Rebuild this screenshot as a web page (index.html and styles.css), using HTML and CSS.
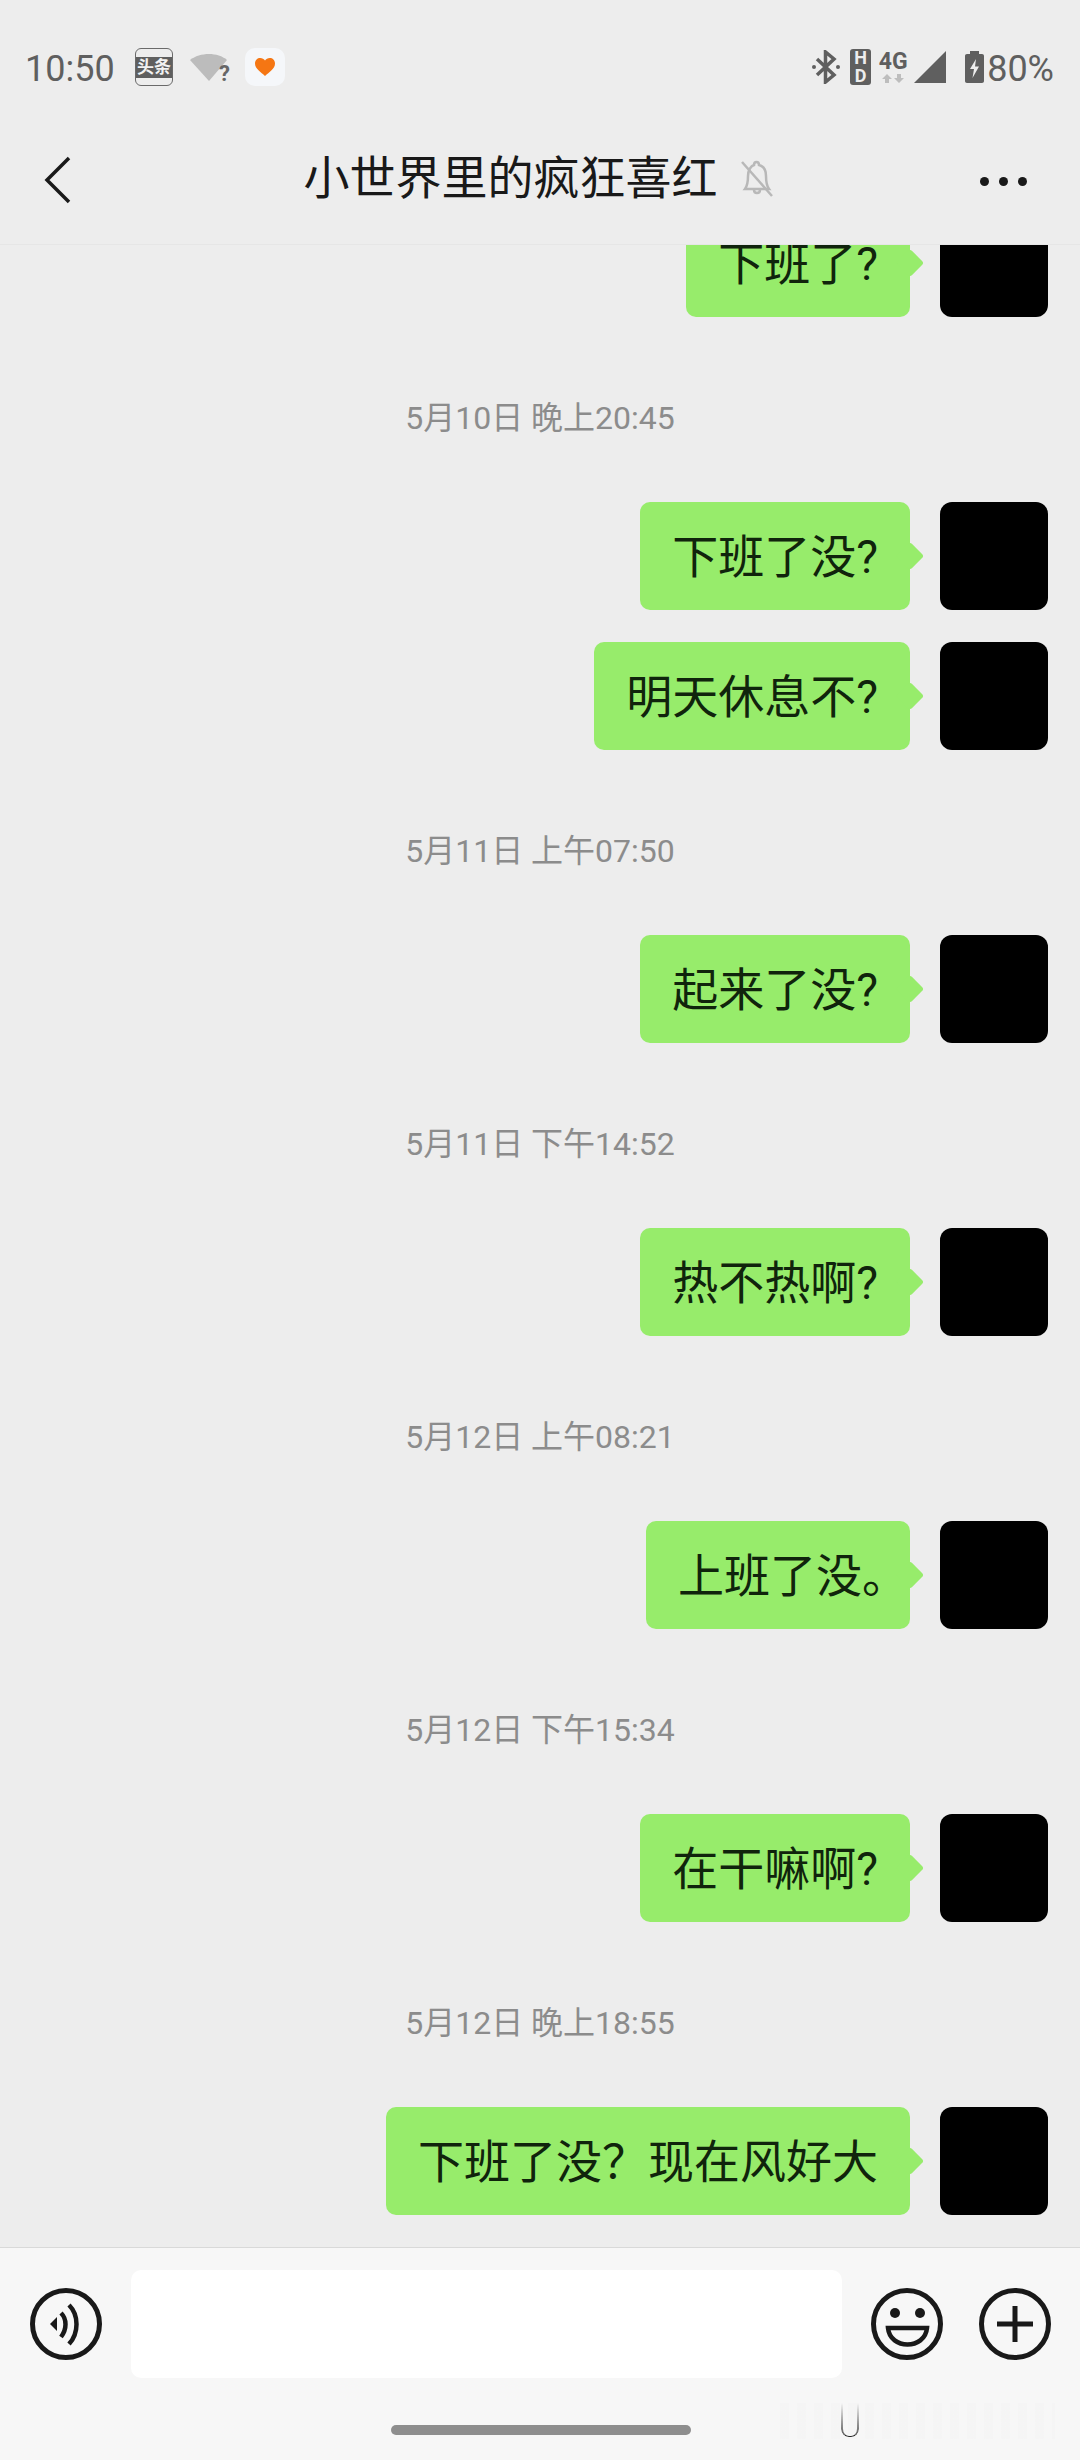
FILE: index.html
```html
<!DOCTYPE html>
<html lang="zh-CN">
<head>
    <meta charset="UTF-8">
    <meta name="viewport" content="width=device-width, initial-scale=1.0">
    <title>小世界里的疯狂喜红</title>
    <link rel="stylesheet" href="styles.css">
</head>
<body>
    <div class="container">
        <div class="status-bar">
            <div class="status-left">
                <span class="status-time">10:50</span>
                <div class="toutiao-icon"><span>头条</span></div>
                <div class="wifi-icon">
                    <svg width="38" height="32" viewBox="0 0 38 32"><path d="M0 9C10 1 28 1 37 9L19 30Z" fill="#bcbcbc"/></svg>
                    <span class="wifi-mark">?</span>
                </div>
                <div class="heart-icon">
                    <svg width="20" height="18" viewBox="0 0 20 18"><path d="M10 18C6 14 0 11 0 5.500C0 2 2.500 0 5.200 0C7.300 0 9 1 10 2.500C11 1 12.700 0 14.800 0C17.500 0 20 2 20 5.500C20 11 14 14 10 18Z" fill="#f57613"/></svg>
                </div>
            </div>
            <div class="status-right">
                <svg class="bt-icon" width="28" height="34" viewBox="0 0 28 34">
                    <path d="M5 9L22 25L13.500 32V2L22 9L5 25" fill="none" stroke="#5f5f5f" stroke-width="3.500"/>
                    <circle cx="2" cy="17" r="2" fill="#5f5f5f"/>
                    <circle cx="26" cy="17" r="2" fill="#5f5f5f"/>
                </svg>
                <div class="hd-icon"><span>H</span><span>D</span></div>
                <div class="net-icon">
                    <span class="net-label">4G</span>
                    <svg width="22" height="10" viewBox="0 0 22 10"><path d="M5 0L10 5H7V9H3V5H0ZM17 9L12 4H15V0H19V4H22Z" fill="#bdbdbd"/></svg>
                </div>
                <svg class="signal-icon" width="32" height="32" viewBox="0 0 32 32"><path d="M32 0V32H0Z" fill="#5f5f5f"/></svg>
                <svg class="battery-icon" width="19" height="32" viewBox="0 0 19 32">
                    <path d="M5 0H14V3H17C18.200 3 19 3.800 19 5V30C19 31.200 18.200 32 17 32H2C.800 32 0 31.200 0 30V5C0 3.800 .800 3 2 3H5Z" fill="#5f5f5f"/>
                    <path d="M11 8L5 18H9L7.500 27L14 15.500H10Z" fill="#ededed"/>
                </svg>
                <span class="status-battery">80%</span>
            </div>
        </div>

        <div class="nav-bar">
            <svg class="back-btn" width="30" height="48" viewBox="0 0 30 48"><path d="M26 2L4 24L26 46" fill="none" stroke="#191919" stroke-width="3.500"/></svg>
            <div class="nav-title">
                <span class="title-text">小世界里的疯狂喜红</span>
                <svg width="34" height="38" viewBox="0 0 34 38">
                    <path d="M5 30C8 26 8 22 8 17C8 11 11 7 14 6C14 2 19 2 19 6C23 7 26 11 26 17C26 22 26 26 29 30Z M14 31C14 35 20 35 20 31" fill="none" stroke="#b8b8b8" stroke-width="2.500"/>
                    <path d="M2 3L32 37" stroke="#b8b8b8" stroke-width="2.500"/>
                </svg>
            </div>
            <div class="more-btn"><i></i><i></i><i></i></div>
        </div>

        <div class="chat-list">
            <div class="msg-row first-row">
                <div class="bubble">下班了?</div>
                <div class="avatar"></div>
            </div>

            <div class="msg-time">5月10日 晚上20:45</div>
            <div class="msg-row">
                <div class="bubble">下班了没?</div>
                <div class="avatar"></div>
            </div>
            <div class="msg-row next-row">
                <div class="bubble">明天休息不?</div>
                <div class="avatar"></div>
            </div>

            <div class="msg-time">5月11日 上午07:50</div>
            <div class="msg-row">
                <div class="bubble">起来了没?</div>
                <div class="avatar"></div>
            </div>

            <div class="msg-time">5月11日 下午14:52</div>
            <div class="msg-row">
                <div class="bubble">热不热啊?</div>
                <div class="avatar"></div>
            </div>

            <div class="msg-time">5月12日 上午08:21</div>
            <div class="msg-row">
                <div class="bubble">上班了没<span class="half-punct">。</span></div>
                <div class="avatar"></div>
            </div>

            <div class="msg-time">5月12日 下午15:34</div>
            <div class="msg-row">
                <div class="bubble">在干嘛啊?</div>
                <div class="avatar"></div>
            </div>

            <div class="msg-time">5月12日 晚上18:55</div>
            <div class="msg-row">
                <div class="bubble">下班了没&#xFF1F;现在风好大</div>
                <div class="avatar"></div>
            </div>
        </div>

        <div class="bottom-bar">
            <div class="input-row">
                <svg class="round-btn" width="72" height="72" viewBox="0 0 72 72">
                    <circle cx="36" cy="36" r="33.500" fill="none" stroke="#191919" stroke-width="5"/>
                    <path d="M20 36L27 29V43Z" fill="#191919"/>
                    <path d="M31 25C37 31 37 41 31 49M39 17C49 27 49 45 39 56" fill="none" stroke="#191919" stroke-width="4.500"/>
                </svg>
                <div class="text-input"></div>
                <svg class="round-btn" width="72" height="72" viewBox="0 0 72 72">
                    <circle cx="36" cy="36" r="33.500" fill="none" stroke="#191919" stroke-width="5"/>
                    <circle cx="24" cy="25" r="5" fill="#191919"/>
                    <circle cx="49" cy="25" r="5" fill="#191919"/>
                    <path d="M17 40H56C54 62 19 62 17 40Z" fill="none" stroke="#191919" stroke-width="4.500"/>
                </svg>
                <svg class="round-btn plus-btn" width="72" height="72" viewBox="0 0 72 72">
                    <circle cx="36" cy="36" r="33.500" fill="none" stroke="#191919" stroke-width="5"/>
                    <path d="M18 36H54M36 18V54" stroke="#191919" stroke-width="5"/>
                </svg>
            </div>
            <div class="home-bar"></div>
            <div class="watermark"><div class="watermark-u"></div></div>
        </div>
    </div>
</body>
</html>
```

FILE: styles.css
```css
body, html {
    margin: 0;
    padding: 0;
    height: 100%;
}

.container {
    display: flex;
    flex-direction: column;
    height: 100%;
    background-color: #ededed;
    font-family: Roboto, "Noto Sans CJK SC", sans-serif;
    overflow: hidden;
}

/* 状态栏 */
.status-bar {
    height: 100px;
    padding: 34px 26px 0 25px;
    box-sizing: border-box;
    display: flex;
    justify-content: space-between;
    align-items: flex-start;
    color: #5f5f5f;
}

.status-left, .status-right {
    display: flex;
    align-items: center;
    height: 66px;
}

.status-time {
    font-size: 36px;
    line-height: 66px;
    width: 110px;
    padding-top: 3px;
}

.status-battery {
    font-size: 36px;
    line-height: 66px;
    margin-left: 3px;
    padding-top: 3px;
}

.toutiao-icon {
    width: 38px;
    height: 38px;
    box-sizing: border-box;
    border: 1.5px solid #6a6a6a;
    border-radius: 6px;
    display: flex;
    align-items: center;
}

.toutiao-icon span {
    flex: 1;
    height: 21px;
    background-color: #5f5f5f;
    color: #f2f2f2;
    font-size: 17px;
    font-weight: 700;
    line-height: 21px;
    text-align: center;
    white-space: nowrap;
}

.wifi-icon {
    position: relative;
    width: 38px;
    height: 32px;
    margin-left: 17px;
}

.wifi-mark {
    position: absolute;
    right: -2px;
    bottom: -3px;
    font-size: 22px;
    font-weight: 700;
    line-height: 24px;
    color: #666;
}

.heart-icon {
    width: 40px;
    height: 38px;
    margin-left: 17px;
    border-radius: 10px;
    background-color: #f5f7fa;
    display: flex;
    align-items: center;
    justify-content: center;
}

.hd-icon {
    width: 21px;
    height: 36px;
    margin-left: 10px;
    border-radius: 3px;
    background-color: #5f5f5f;
    color: #ededed;
    font-size: 18px;
    font-weight: 700;
    line-height: 18px;
    display: flex;
    flex-direction: column;
    align-items: center;
}

.net-icon {
    width: 32px;
    margin-left: 6px;
    display: flex;
    flex-direction: column;
    align-items: center;
}

.net-label {
    font-size: 23px;
    font-weight: 700;
    line-height: 24px;
}

.signal-icon {
    margin-left: 5px;
}

.battery-icon {
    margin-left: 19px;
}

/* 标题栏 */
.nav-bar {
    height: 145px;
    box-sizing: border-box;
    position: relative;
    display: flex;
    align-items: center;
    justify-content: center;
    padding: 12px 3px 0 0;
    border-bottom: 1px solid #e6e6e6;
}

.back-btn {
    position: absolute;
    left: 43px;
    top: 56px;
}

.nav-title {
    display: flex;
    align-items: center;
    gap: 22px;
}

.title-text {
    font-size: 46px;
    line-height: 60px;
    color: #191919;
}

.more-btn {
    position: absolute;
    right: 53px;
    top: 77px;
    display: flex;
    gap: 10px;
}

.more-btn i {
    width: 9px;
    height: 9px;
    border-radius: 50%;
    background-color: #191919;
}

/* 聊天内容 */
.chat-list {
    flex: 1;
    min-height: 0;
    overflow: hidden;
    padding-right: 32px;
}

.msg-row {
    display: flex;
    justify-content: flex-end;
    gap: 30px;
}

.first-row {
    margin-top: -36px;
}

.next-row {
    margin-top: 32px;
}

.msg-time {
    height: 40px;
    padding: 81px 0 64px 32px;
    font-size: 32px;
    line-height: 40px;
    color: #8c8c8c;
    text-align: center;
}

.bubble {
    position: relative;
    height: 108px;
    padding: 0 32px;
    border-radius: 10px;
    background-color: #97ec6b;
    color: #10240c;
    font-size: 46px;
    line-height: 111px;
    white-space: nowrap;
}

.bubble::after {
    content: "";
    position: absolute;
    top: 44px;
    right: -10px;
    width: 20px;
    height: 20px;
    border-radius: 3px;
    background-color: #97ec6b;
    transform: rotate(45deg);
}

/* 句号只占半个字宽 */
.half-punct {
    display: inline-block;
    width: 16px;
}

.avatar {
    width: 108px;
    height: 108px;
    border-radius: 12px;
    background-color: #000;
}

/* 底部输入栏 */
.bottom-bar {
    position: relative;
    height: 213px;
    box-sizing: border-box;
    background-color: #f7f7f7;
    border-top: 1px solid #d9d9d9;
    padding: 22px 29px 0 30px;
}

.input-row {
    display: flex;
    align-items: center;
    height: 108px;
}

.round-btn {
    flex: none;
}

.text-input {
    flex: 1;
    height: 108px;
    margin: 0 29px;
    border-radius: 10px;
    background-color: #fff;
}

.plus-btn {
    margin-left: 36px;
}

.home-bar {
    width: 300px;
    height: 10px;
    margin: 47px auto 0;
    border-radius: 5px;
    background-color: #8e8e8e;
}

.watermark {
    position: absolute;
    left: 780px;
    top: 155px;
    width: 275px;
    height: 36px;
    background: repeating-linear-gradient(90deg, rgba(0, 0, 0, 0.007) 0 9px, rgba(0, 0, 0, 0) 9px 17px);
}

.watermark-u {
    position: absolute;
    left: 61px;
    top: 0;
    width: 18px;
    height: 34px;
    box-sizing: border-box;
    border-left: 2px solid #555;
    border-right: 2px solid #555;
    border-bottom: 1px solid #222;
    border-radius: 0 0 8px 8px;
    -webkit-mask-image: linear-gradient(to bottom, transparent, #000);
    mask-image: linear-gradient(to bottom, transparent, #000);
}
```
